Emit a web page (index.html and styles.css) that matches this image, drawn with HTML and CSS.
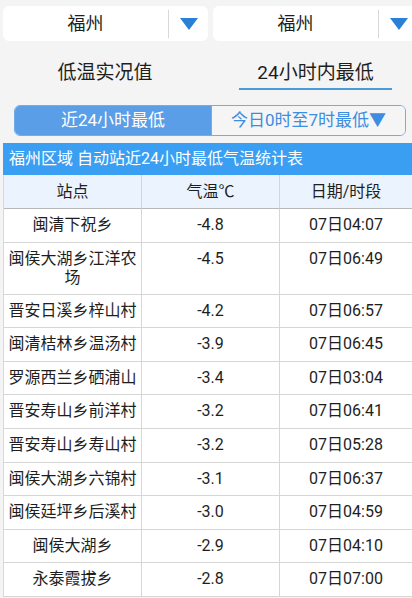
FILE: index.html
```html
<!DOCTYPE html>
<html lang="zh">
<head>
<meta charset="utf-8">
<title>福州 低温</title>
<link rel="stylesheet" href="styles.css">
</head>
<body>
<div class="page">
  <div class="selectors">
    <div class="select">
      <span class="sel-text">福州</span>
      <span class="sel-sep"></span>
      <span class="sel-arrow"><svg width="18" height="12" viewBox="0 0 18 12"><path d="M0 0H18L9 12Z" fill="#2a7fd6"/></svg></span>
    </div>
    <div class="select">
      <span class="sel-text">福州</span>
      <span class="sel-sep"></span>
      <span class="sel-arrow"><svg width="18" height="12" viewBox="0 0 18 12"><path d="M0 0H18L9 12Z" fill="#2a7fd6"/></svg></span>
    </div>
  </div>

  <div class="tabs">
    <div class="tab">低温实况值</div>
    <div class="tab active">24小时内最低</div>
  </div>

  <div class="segment">
    <div class="seg seg-on">近24小时最低</div>
    <div class="seg seg-off">今日0时至7时最低▼</div>
  </div>

  <div class="table">
    <div class="caption">福州区域 自动站近24小时最低气温统计表</div>
    <div class="grid">
      <div class="cell head">站点</div>
      <div class="cell head">气温℃</div>
      <div class="cell head">日期/时段</div>

      <div class="cell">闽清下祝乡</div><div class="cell">-4.8</div><div class="cell">07日04:07</div>
      <div class="cell">闽侯大湖乡江洋农场</div><div class="cell">-4.5</div><div class="cell">07日06:49</div>
      <div class="cell">晋安日溪乡梓山村</div><div class="cell">-4.2</div><div class="cell">07日06:57</div>
      <div class="cell">闽清桔林乡温汤村</div><div class="cell">-3.9</div><div class="cell">07日06:45</div>
      <div class="cell">罗源西兰乡硒浦山</div><div class="cell">-3.4</div><div class="cell">07日03:04</div>
      <div class="cell">晋安寿山乡前洋村</div><div class="cell">-3.2</div><div class="cell">07日06:41</div>
      <div class="cell">晋安寿山乡寿山村</div><div class="cell">-3.2</div><div class="cell">07日05:28</div>
      <div class="cell">闽侯大湖乡六锦村</div><div class="cell">-3.1</div><div class="cell">07日06:37</div>
      <div class="cell">闽侯廷坪乡后溪村</div><div class="cell">-3.0</div><div class="cell">07日04:59</div>
      <div class="cell">闽侯大湖乡</div><div class="cell">-2.9</div><div class="cell">07日04:10</div>
      <div class="cell">永泰霞拔乡</div><div class="cell">-2.8</div><div class="cell">07日07:00</div>
    </div>
  </div>
</div>
</body>
</html>
```

FILE: styles.css
```css
* { box-sizing: border-box; }
html, body {
  margin: 0;
  padding: 0;
  background: #f4f4f4;
  overflow: hidden;
}
body {
  font-family: "Roboto", "Noto Sans CJK SC", sans-serif;
  color: #1e1e1e;
  width: 412px;
  height: 598px;
}
.page {
  width: 412px;
  overflow: hidden;
}
.selectors {
  display: flex;
  gap: 5px;
  padding: 6px 0 0 3px;
  width: 430px;
}
.select {
  flex: 0 0 205px;
  height: 35px;
  background: #fff;
  border-radius: 6px;
  display: flex;
  align-items: center;
}
.sel-text {
  width: 165px;
  text-align: center;
  font-size: 18px;
  line-height: 24px;
}
.sel-sep {
  width: 1px;
  height: 28px;
  background: #d8d8d8;
}
.sel-arrow {
  flex: 1;
  display: flex;
  justify-content: center;
  align-items: center;
  padding-top: 1px;
}
.sel-arrow svg { display: block; }

.tabs {
  display: flex;
  margin-top: 17px;
}
.tab {
  height: 32px;
  font-size: 19px;
  line-height: 30px;
  text-align: center;
  width: 210px;
}
.tab.active {
  width: 153px;
  margin-left: 29px;
  border-bottom: 2px solid #4b9bd8;
}

.segment {
  display: flex;
  margin: 15px 0 0 14px;
  width: 392px;
  height: 31px;
  border: 1px solid #74ace8;
  border-radius: 6px;
  overflow: hidden;
}
.seg {
  font-size: 17px;
  line-height: 29px;
  text-align: center;
}
.seg-on {
  width: 196px;
  background: #599ee6;
  color: #fff;
}
.seg-off {
  flex: 1;
  background: #f5f5f5;
  color: #3d8de0;
  border-left: 1px solid #74ace8;
}

.table {
  margin: 7px 0 0 3px;
  width: 409px;
}
.caption {
  height: 32px;
  background: #3a9ff2;
  color: #fff;
  font-size: 16px;
  line-height: 32px;
  padding-left: 6px;
}
.grid {
  display: grid;
  grid-template-columns: 138px 138px 1fr;
  background: #fff;
  border-left: 1px solid #d8d8d8;
}
.cell {
  min-height: 33.6px;
  padding: 6px 3px;
  font-size: 16px;
  line-height: 19.5px;
  text-align: center;
  border-right: 1px solid #d6d6d6;
  border-bottom: 1px solid #d6d6d6;
}
.cell:nth-child(3n) { border-right: none; }
.cell.head {
  height: 34px;
  background: #eaf3fe;
  border-bottom: 1px solid #b8b8b8;
  padding-top: 7px;
}
```
